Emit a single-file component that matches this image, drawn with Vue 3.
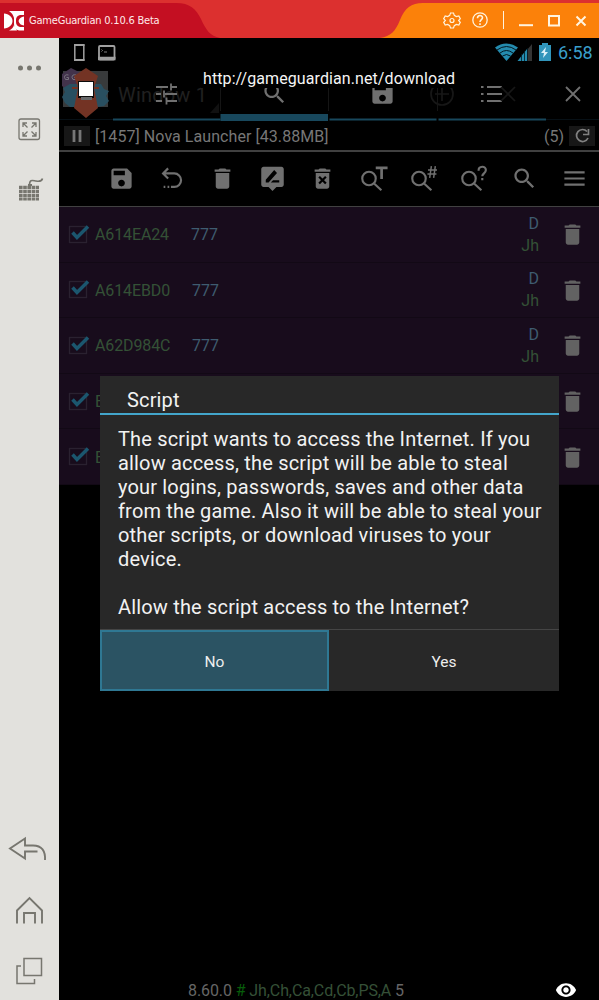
<script setup>
const rows = [
  { addr: 'A614EA24', value: '777' },
  { addr: 'A614EBD0', value: '777' },
  { addr: 'A62D984C', value: '777' },
  { addr: 'B', value: '' },
  { addr: 'B', value: '' },
]
const lines = [
  'The script wants to access the Internet. If you',
  'allow access, the script will be able to steal',
  'your logins, passwords, saves and other data',
  'from the game. Also it will be able to steal your',
  'other scripts, or download viruses to your',
  'device.',
]
const trash = 'M6 19c0 1.1.9 2 2 2h8c1.1 0 2-.9 2-2V7H6v12zM19 4h-3.5l-1-1h-5l-1 1H5v2h14V4z'
const save = 'M17 3H5c-1.11 0-2 .9-2 2v14c0 1.1.89 2 2 2h14c1.1 0 2-.9 2-2V7l-4-4zm-5 16c-1.66 0-3-1.34-3-3s1.34-3 3-3 3 1.34 3 3-1.34 3-3 3zm3-10H5V5h10v4z'
const search = 'M15.5 14h-.79l-.28-.27C15.41 12.59 16 11.11 16 9.5 16 5.91 13.09 3 9.5 3S3 5.91 3 9.5 5.91 16 9.5 16c1.61 0 3.09-.59 4.23-1.57l.27.28v.79l5 4.99L20.49 19l-4.99-5zm-6 0C7.01 14 5 11.99 5 9.5S7.01 5 9.5 5 14 7.01 14 9.5 11.99 14 9.5 14z'
</script>

<template>
  <div class="window">
    <header class="titlebar">
      <svg class="title-shape" width="599" height="38" viewBox="0 0 599 38">
        <path d="M0 3H176C190 3 196 9 201 19C206 30 210 36 220 38H0Z" fill="#c40f22" />
        <path d="M599 3H423C411 3 405 8 400 20C395 32 391 36 380 38H599Z" fill="#fb810a" />
      </svg>
      <svg class="logo" width="20" height="20" viewBox="0 0 20 20" fill="#fff">
        <path d="M0 2.500C5 3 8.500 6 8.500 10C8.500 14 5 17 0 17.500Z" />
        <path d="M5 0H20V4H16Q12 5 12 9V11Q12 15 16 16H20V19.500H15Q10 18.500 10 13V7Q9 2.500 5 0Z" />
        <path d="M20 5.500V14.500Q15.500 14 14.500 10Q15.500 6 20 5.500Z" />
        <path d="M5 19.500Q9 17.500 10 14L13 19.500Z" />
      </svg>
      <span class="app-name">GameGuardian 0.10.6 Beta</span>
      <svg class="controls" width="160" height="36" viewBox="440 2 160 36" fill="none" stroke="#fff4df">
        <path d="M450.500 13h3l.8 2.400 2 1.100 2.500-.5 1.500 2.600-1.700 1.900 1.700 1.900-1.500 2.600-2.500-.5-2 1.100-.8 2.400h-3l-.8-2.400-2-1.100-2.500.5-1.500-2.600 1.700-1.900-1.700-1.900 1.500-2.600 2.500.5 2-1.100z" stroke-width="1.200" />
        <circle cx="452" cy="20.500" r="2" stroke-width="1.200" />
        <circle cx="480" cy="20" r="7.200" stroke-width="1.300" />
        <path d="M477.500 18.200c0-3.500 5-3.500 5-.5 0 2-2.500 1.800-2.500 4.300M480 23.300v1.700" stroke-width="1.600" />
        <path d="M503.500 11v18" stroke-width="1" />
        <path d="M519 25.200h14" stroke-width="2" />
        <rect x="549" y="16" width="10" height="9.500" stroke-width="2" />
        <path d="M576.500 16.500l9 9M585.500 16.500l-9 9" stroke-width="2" />
      </svg>
    </header>

    <div class="body">
      <aside class="sidebar">
        <div class="side-group">
          <svg width="59" height="172" viewBox="0 38 59 172" fill="none" stroke="#77766f">
            <g fill="#77766f" stroke="none"><circle cx="20.500" cy="68" r="2.500" /><circle cx="29.500" cy="68" r="2.500" /><circle cx="38.500" cy="68" r="2.500" /></g>
            <rect x="19" y="119" width="20.500" height="20.500" rx="2" stroke-width="1.300" />
            <path d="M27.500 127.500l-4-4M23 127v-4h4M31.500 127.500l4-4M32 123h4v4M27.500 131.500l-4 4M23 132v4h4M31.500 131.500l4 4M36 132v4h-4" stroke-width="1.300" />
            <path d="M29.500 185c0-6 3-4.500 6.500-4 3 .5 6 0 6.500-2.500" stroke-width="1.600" />
            <path d="M19 187.300h20M19 191.300h20M19 195.300h20M19 199h20" stroke-width="3.200" stroke-dasharray="3.600 .6" />
            <path d="M28 185h4" stroke-width="2" />
          </svg>
        </div>
        <div class="side-group">
          <svg width="59" height="180" viewBox="0 820 59 180" fill="none" stroke="#77766f" stroke-width="1.900">
            <path d="M45 860c.5-9-3-14.500-12-14.500h-8v-7L10 848.500l15 10v-7h12.500" />
            <path d="M17 923.500v-13L29.500 898 42 910.500v13M24 923.500V913h11v10.500" />
            <path d="M24 958.500h17.500v17H24zM21 966h-4v17.500h17.500V979" stroke-width="1.500" />
          </svg>
        </div>
      </aside>

      <main class="android">
        <div class="status">
          <svg width="70" height="27" viewBox="59 38 70 27" fill="none" stroke="#a0a0a0">
            <rect x="74.800" y="45" width="9" height="15" stroke-width="1.500" /><path d="M74 45h10.500M74 60h10.500" stroke-width="2" />
            <rect x="99" y="46" width="15.500" height="13.500" rx="1" stroke-width="1.800" /><path d="M98 58.500h17.500" stroke-width="3.500" />
            <path d="M101.500 49.500l1 1-1 1M104 52h3" stroke-width=".8" />
          </svg>
          <div class="status-right">
            <svg width="58" height="27" viewBox="493 38 58 27">
              <path d="M494 47.500Q505 39.500 517 47.500L505.500 61Z" fill="#248bae" />
              <path d="M496 50Q505.500 43 515 50M499 53Q505.500 48 512 53M501.500 56Q505.500 53 509.500 56" fill="none" stroke="#031822" stroke-width="1" />
              <path d="M531 44v17h-14z" fill="#353535" /><path d="M526 49v12h-9.500z" fill="#248bae" />
              <path d="M520.500 54v7M523.500 51v10M526.500 48v13" stroke="#031822" stroke-width=".8" />
              <path d="M541 43h6v2h3v16h-12V45h3z" fill="#3195bb" /><path d="M545 47l-5 6h3l-1 5 5-6h-3z" fill="#d9f0f8" />
            </svg>
            <span class="clock">6:58</span>
          </div>
        </div>

        <div class="tabs">
          <span class="ghost-window">Window 1</span>
          <svg class="tab-art" width="540" height="56" viewBox="59 65 540 56">
            <rect x="63" y="71" width="45" height="36" fill="#383a3b" />
            <path d="M62 74l9-6 8 4v13l-9 7-8-6z" fill="#42334b" />
            <path d="M68.500 75q-4-1-4 2.500 0 3 4 2v-2h-2M76 75q-4-1-4 2.500 0 3 4 2v-2h-2" fill="none" stroke="#77727c" stroke-width="1" />
            <path d="M63 88l7-4h31l3 5 5 2-3 5 3 5-5 5-7 1H70l-5-4-3-6 3-5z" fill="#294f60" />
            <path d="M86 68l12 8-4 12 4 20-12 10-12-10 4-20-4-12z" fill="#733324" />
            <path d="M72 88h7M92 88h7" stroke="#733324" stroke-width="2" />
            <rect x="78" y="81" width="16" height="17" fill="#0b0b0b" /><path d="M81 97h11v3H81z" fill="#67686a" />
            <rect x="79" y="82" width="14" height="14" fill="#fff" />
            <path d="M220.500 88v23M328.500 88v23M437.500 88v23" stroke="#151515" />
            <path d="M219 103v10h-9z" fill="#111" />
            <path d="M59 119.500h54M546 119.500h53" stroke="#071016" />
            <path d="M113 119.500h107.500M329.500 119.500h107M438.500 119.500h107.500" stroke="#18485d" stroke-width="2" />
            <path d="M220.500 117.500H328" stroke="#18485d" stroke-width="7" />
            <g stroke="#707070" stroke-width="1.800">
              <path d="M156 87h12M171 87h6M171 83.500v7M156 94h5M165 94h12M164 90.500v7M156 101h6M166 101h11M166.500 97.500v7" />
              <path d="M487 87h15M487 94h15M487 101h15M481 87h2.500M481 94h2.500M481 101h2.500" />
              <path d="M566 87l14 14M580 87l-14 14" />
            </g>
            <g fill="none" stroke="#171717" stroke-width="1.700"><circle cx="442" cy="94" r="11" /><path d="M435 94h14M442 87v14M501 87l14 14M515 87l-14 14" /></g>
          </svg>
          <svg class="tab-search" width="27" height="27" viewBox="0 0 24 24"><path :d="search" fill="#707070" /></svg>
          <svg class="tab-save" width="27" height="27" viewBox="0 0 24 24"><path :d="save" fill="#707070" /></svg>
          <span class="toast">http://gameguardian.net/download</span>
        </div>

        <div class="process">
          <span class="mini"><svg width="26" height="20" viewBox="0 0 26 20"><path d="M10 4v12M16 4v12" stroke="#777" stroke-width="2.800" /></svg></span>
          <span class="process-name">[1457] Nova Launcher [43.88MB]</span>
          <span class="count">(5)</span>
          <span class="mini"><svg width="26" height="20" viewBox="0 0 26 20" fill="none" stroke="#818181" stroke-width="1.700"><path d="M18 5.500A6 6 0 1 0 19 12M19.500 3v5.500H14" /></svg></span>
        </div>

        <div class="toolbar">
          <svg viewBox="0 0 24 24"><path :d="save" /></svg>
          <svg viewBox="0 0 24 24" class="line"><path d="M9 3L4.500 7.500 9 12M5 7.500h9.500a6 6 0 0 1 0 12h-3M5 19.500h1.500M8.500 19.500H10" /></svg>
          <svg viewBox="0 0 24 24"><path :d="trash" /></svg>
          <svg viewBox="0 0 24 24"><path fill-rule="evenodd" d="M20 1.500H4c-1 0-2 .9-2 2v14c0 1.100 1 2 2 2h4.500L12 23l3.500-3.500H20c1.100 0 2-.9 2-2v-14c0-1.100-.9-2-2-2zM6 15.500V13l7.500-8.500 2.500 2.500-7.500 8.500zm12 0h-7.500l2-2H18z" /></svg>
          <svg viewBox="0 0 24 24"><path :d="trash" /><path d="M9 10.500l6 6M15 10.500l-6 6" stroke="#000" stroke-width="2" /></svg>
          <svg v-for="s in ['T', '#', '?']" :key="s" viewBox="0 0 24 24" class="line">
            <circle cx="8" cy="12" r="6" /><path d="M12.500 16.500L19 22.500" />
            <path v-if="s === 'T'" d="M14 2.500h10.500M19.200 2.500V12.500" class="bold" />
            <path v-else-if="s === '#'" d="M16 4.500h8M15.500 8h8M19 1l-1.500 10.500M22.500 1L21 11.500" class="thin" />
            <path v-else d="M16.500 5c0-4.500 6.500-4.500 6.500-.5 0 2.800-3.200 3-3.200 5.500M19.800 11.500v2" class="mark" />
          </svg>
          <svg viewBox="0 0 24 24"><path :d="search" /></svg>
          <svg viewBox="0 0 24 24" class="line"><path d="M3 6.500h18M3 12h18M3 17.500h18" /></svg>
        </div>

        <ul class="list">
          <li v-for="(r, i) in rows" :key="i" class="row">
            <svg class="check" width="24" height="24" viewBox="0 0 24 24" fill="none">
              <rect x="2.500" y="5.500" width="17" height="16" stroke="#2a2130" stroke-width="1.300" />
              <path d="M5.500 11.500l4.500 5L21 5.500" stroke="#1b566e" stroke-width="3.500" />
            </svg>
            <span class="addr">{{ r.addr }}</span>
            <span class="value">{{ r.value }}</span>
            <span class="type" v-if="r.value"><span class="d">D</span><span>Jh</span></span>
            <svg class="bin" width="27" height="27" viewBox="0 0 24 24"><path :d="trash" fill="#626262" /></svg>
          </li>
        </ul>

        <footer class="footer">
          <span class="version">8.60.0 <b>#</b> <i>Jh,Ch,Ca,Cd,Cb,PS,A</i> 5</span>
          <svg width="22" height="22" viewBox="0 0 24 24" fill="#fff"><path d="M12 4.500C7 4.500 2.730 7.610 1 12c1.730 4.390 6 7.500 11 7.500s9.270-3.110 11-7.500c-1.730-4.390-6-7.500-11-7.500zM12 17c-2.760 0-5-2.240-5-5s2.240-5 5-5 5 2.240 5 5-2.240 5-5 5zm0-8c-1.660 0-3 1.340-3 3s1.340 3 3 3 3-1.340 3-3-1.340-3-3-3z" /></svg>
        </footer>

        <section class="dialog">
          <h1>Script</h1>
          <div class="message">
            <p v-for="l in lines" :key="l">{{ l }}</p>
            <p class="question">Allow the script access to the Internet?</p>
          </div>
          <div class="buttons"><button class="focused">No</button><button>Yes</button></div>
        </section>
      </main>
    </div>
  </div>
</template>

<style>
body { background: #000; }
</style>

<style scoped>
* { box-sizing: border-box; }
.window { width: 599px; height: 1000px; overflow: hidden; display: flex; flex-direction: column; background: #000; font-family: Roboto, "Liberation Sans", sans-serif; }
svg { display: block; flex: none; }
.titlebar { position: relative; height: 38px; flex: none; background: #dc302f; display: flex; align-items: center; padding-left: 4px; }
.title-shape { position: absolute; left: 0; top: 0; }
.logo { position: relative; margin-top: 3px; }
.app-name { position: relative; margin: 3px 0 0 5px; color: #ffe9e9; font: 11px "DejaVu Sans Condensed", "DejaVu Sans", sans-serif; font-stretch: condensed; letter-spacing: -.2px; white-space: nowrap; }
.controls { position: relative; margin-left: auto; margin-right: -1px; margin-top: 2px; }
.body { display: flex; flex: 1; }
.sidebar { width: 59px; background: #e2e1dd; display: flex; flex-direction: column; justify-content: space-between; }
.android { position: relative; width: 540px; height: 962px; display: flex; flex-direction: column; background: #000; }
.status { height: 27px; display: flex; justify-content: space-between; }
.status-right { display: flex; padding-right: 6px; }
.clock { color: #3a9fca; font-size: 18px; line-height: 30px; width: 35px; margin-left: 6px; white-space: nowrap; }
.tabs { position: relative; height: 56px; flex: none; }
.tab-art { position: relative; }
.ghost-window { position: absolute; left: 59px; top: 18px; font-size: 20px; line-height: 24px; color: #202020; letter-spacing: .2px; }
.tab-search { position: absolute; left: 202px; top: 15px; }
.tab-save { position: absolute; left: 310px; top: 15px; }
.toast { position: absolute; left: 142px; top: 2px; width: 258px; height: 21px; padding-left: 2px; background: #000; color: #f5f5f5; font-size: 16px; line-height: 24px; letter-spacing: .09px; white-space: nowrap; }
.process { height: 31px; flex: none; display: flex; align-items: center; padding: 1px 4px 0 5px; color: #777; font-size: 16px; border-bottom: 2px solid #404040; }
.mini { width: 26px; background: #171717; }
.process-name { margin-left: 5px; letter-spacing: .06px; white-space: nowrap; }
.count { margin-left: auto; margin-right: 5px; }
.toolbar { height: 55px; flex: none; display: flex; justify-content: space-between; align-items: center; padding: 0 11px 1px 49px; border-bottom: 1px solid #414141; }
.toolbar svg { width: 27px; height: 27px; fill: #707070; overflow: visible; }
.toolbar .line { fill: none; stroke: #707070; stroke-width: 1.9; }
.toolbar .thin { stroke-width: 1.3; }
.toolbar .mark { stroke-width: 1.9; }
.toolbar .bold { stroke-width: 2.4; }
.list { margin: 0; padding: 0; list-style: none; }
.row { height: 55.6px; display: flex; align-items: center; background: #180c1c; border-bottom: 1px solid #120915; font-size: 16px; color: #345136; padding-top: 1px; }
.check { margin: -4px 0 0 8px; }
.addr { width: 96px; margin-left: 4px; letter-spacing: -.12px; white-space: nowrap; }
.value { color: #3f5c70; }
.row:nth-child(n+2) .value { margin-left: 1px; }
.type { margin-left: auto; width: 24px; text-align: right; line-height: 22px; display: flex; flex-direction: column; }
.d { color: #3f5c70; }
.bin { margin: 0 13px 0 20px; }
.row:nth-child(n+4) .bin { margin-left: auto; }
.footer { margin-top: auto; height: 20px; display: flex; align-items: center; justify-content: space-between; padding: 0 22px 0 129px; color: #666; font-size: 16px; letter-spacing: -.1px; white-space: nowrap; }
.footer b { font-weight: 400; color: #075c0a; }
.footer i { font-style: normal; color: #355037; }
.dialog { position: absolute; left: 41px; top: 338px; width: 459px; height: 315px; background: #282828; color: #f2f2f2; display: flex; flex-direction: column; }
h1 { margin: 0; height: 39px; flex: none; padding: 2px 0 0 27px; font-size: 20px; font-weight: 400; line-height: 44px; letter-spacing: .15px; border-bottom: 2px solid #43a6cb; }
.message { flex: 1; padding: 12px 0 0 18px; font-size: 20px; line-height: 24px; letter-spacing: .17px; }
.message p { margin: 0; white-space: nowrap; }
.message .question { margin-top: 24px; }
.buttons { height: 62px; display: flex; border-top: 1px solid #454545; }
button { flex: 1; border: 0; background: none; color: #eee; font: 15.5px Roboto, sans-serif; padding: 2px 0 0; }
.buttons .focused { flex: 0 0 229px; border: 2px solid #2f7893; background: #2b5363; padding: 2px 0 0; }
</style>
